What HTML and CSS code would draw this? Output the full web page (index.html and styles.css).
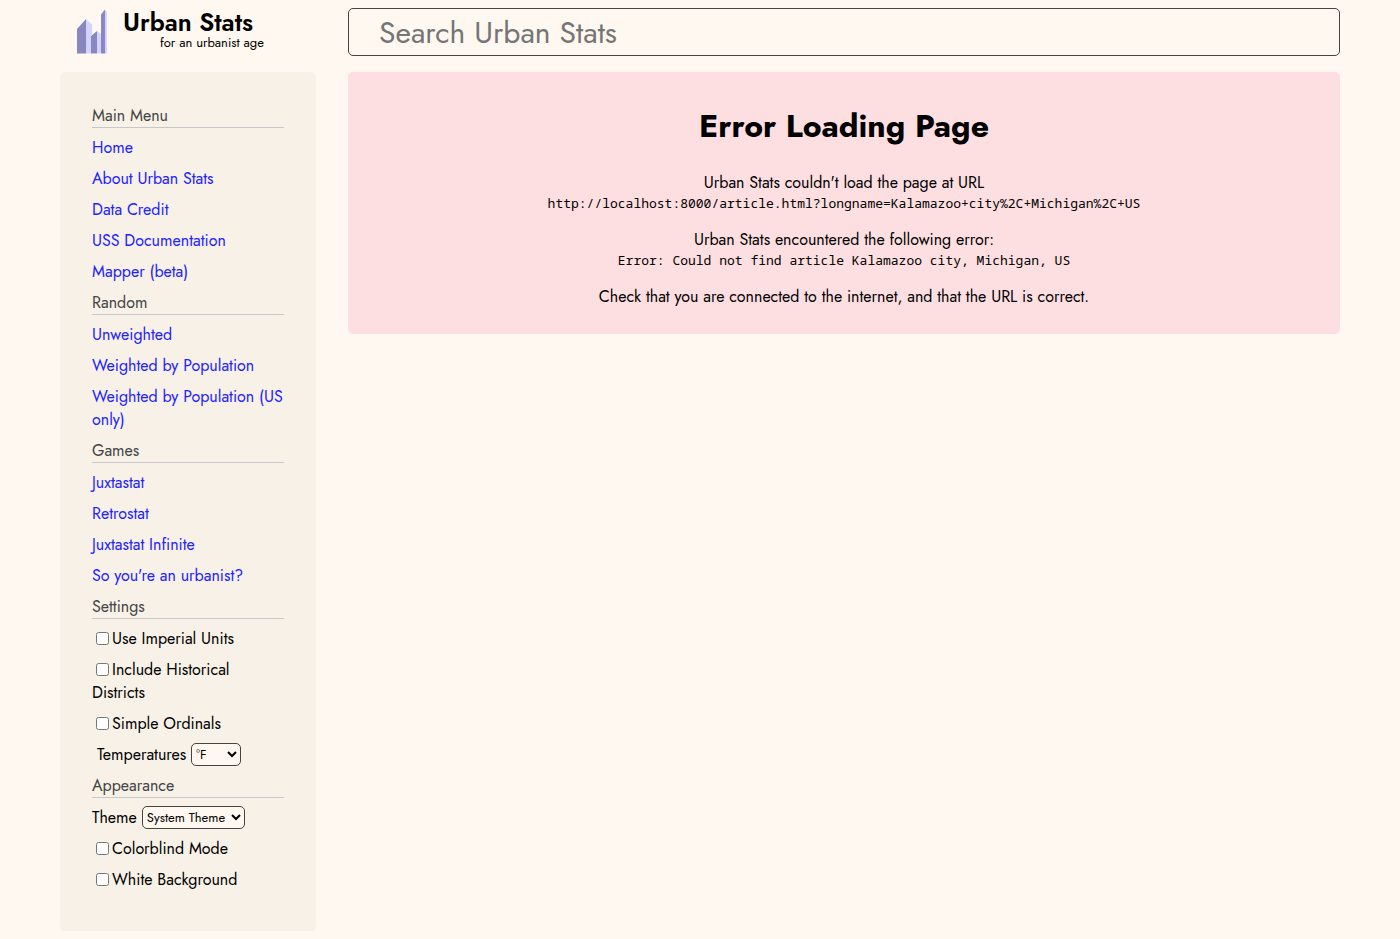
FILE: index.html
```html
<!DOCTYPE html>
<html lang="en">
<head>
<meta charset="utf-8">
<meta name="viewport" content="width=device-width, initial-scale=1">
<title>Urban Stats</title>
<link rel="stylesheet" href="styles.css">
</head>
<body>
<header class="header">
  <a class="logo" href="#">
    <svg class="logo-mark" width="30" height="44" viewBox="0 0 30 44" aria-hidden="true">
      <path fill="#8888bf" d="M0 19 9 9V43.500H0ZM14 26 20 21V43.500H14ZM24 4.500 28 -.5V43.500H24Z"/>
      <path fill="#d3d3ff" d="M9 9 15 14.500V25.200L14 26V43.500H9ZM20 21 24 24V43.500H20ZM28 -.5 30 2.500V43.500H28Z"/>
    </svg>
    <span class="logo-text">
      <span class="logo-name">Urban Stats</span>
      <span class="logo-tagline">for an urbanist age</span>
    </span>
  </a>
  <input class="search" type="text" placeholder="Search Urban Stats" aria-label="Search Urban Stats">
</header>
<div class="body">
  <nav class="sidebar">
    <h2 class="section">Main Menu</h2>
    <ul class="items">
      <li><a href="#">Home</a></li>
      <li><a href="#">About Urban Stats</a></li>
      <li><a href="#">Data Credit</a></li>
      <li><a href="#">USS Documentation</a></li>
      <li><a href="#">Mapper (beta)</a></li>
    </ul>
    <h2 class="section">Random</h2>
    <ul class="items">
      <li><a href="#">Unweighted</a></li>
      <li><a href="#">Weighted by Population</a></li>
      <li><a href="#">Weighted by Population (US only)</a></li>
    </ul>
    <h2 class="section">Games</h2>
    <ul class="items">
      <li><a href="#">Juxtastat</a></li>
      <li><a href="#">Retrostat</a></li>
      <li><a href="#">Juxtastat Infinite</a></li>
      <li><a href="#">So you're an urbanist?</a></li>
    </ul>
    <h2 class="section">Settings</h2>
    <ul class="items">
      <li><input class="check" type="checkbox" id="imperial"><label for="imperial">Use Imperial Units</label></li>
      <li><input class="check" type="checkbox" id="historical"><label for="historical">Include Historical Districts</label></li>
      <li><input class="check" type="checkbox" id="ordinals"><label for="ordinals">Simple Ordinals</label></li>
      <li class="field field-indented"><label for="temperature">Temperatures</label>
        <select class="select select-short" id="temperature"><option>°F</option><option>°C</option></select></li>
    </ul>
    <h2 class="section">Appearance</h2>
    <ul class="items">
      <li class="field"><label for="theme">Theme</label>
        <select class="select select-theme" id="theme"><option>System Theme</option><option>Light Mode</option><option>Dark Mode</option></select></li>
      <li><input class="check" type="checkbox" id="colorblind"><label for="colorblind">Colorblind Mode</label></li>
      <li><input class="check" type="checkbox" id="white"><label for="white">White Background</label></li>
    </ul>
  </nav>
  <main class="error">
    <h1 class="error-title">Error Loading Page</h1>
    <p>Urban Stats couldn't load the page at URL
      <code>http://localhost:8000/article.html?longname=Kalamazoo+city%2C+Michigan%2C+US</code></p>
    <p>Urban Stats encountered the following error:
      <code>Error: Could not find article Kalamazoo city, Michigan, US</code></p>
    <p>Check that you are connected to the internet, and that the URL is correct.</p>
  </main>
</div>
</body>
</html>
```
FILE: styles.css
```css
* {
  box-sizing: border-box;
}

body {
  margin: 0 auto;
  padding: 8px 60px;
  background: #fff8f0;
  color: #000;
  font: 16px/23px Jost, Lato, sans-serif;
}

.header {
  display: grid;
  grid-template-columns: 256px 1fr;
  gap: 32px;
  margin-bottom: 16px;
}

.logo {
  display: flex;
  gap: 16px;
  padding: 2px 17px;
  color: #000;
  text-decoration: none;
}

.logo-mark {
  flex: none;
  overflow: visible;
}

.logo-text {
  display: flex;
  flex-direction: column;
}

.logo-name {
  font-size: 25px;
  font-weight: 600;
  line-height: 24px;
}

.logo-tagline {
  margin-left: 37px;
  font-size: 13px;
  font-weight: 400;
  line-height: 18px;
  white-space: nowrap;
}

.search {
  width: 100%;
  height: 48px;
  padding: 0 30px;
  border: 1px solid #444;
  border-radius: 5px;
  background: #fff8f0;
  color: #000;
  font: 30px Jost, Lato, sans-serif;
}

.search::placeholder {
  color: #757575;
}

.body {
  display: grid;
  grid-template-columns: 256px 1fr;
  gap: 32px;
  align-items: start;
}

.sidebar {
  padding: 32px 32px 40px;
  border-radius: 5px;
  background: #f7f1e8;
}

.section {
  margin: 8px 0;
  border-bottom: 1px solid #c8c8cc;
  color: #444;
  font-size: 16px;
  font-weight: 400;
}

.section:first-child {
  margin-top: 0;
}

.items {
  display: flex;
  flex-direction: column;
  gap: 8px;
  margin: 0;
  padding: 0;
  list-style: none;
}

.items a {
  color: #2222ff;
  text-decoration: none;
}

.check {
  width: 13px;
  height: 13px;
  margin: 3px 3px 0 4px;
  vertical-align: -1px;
}

.field {
  display: flex;
  gap: 5px;
}

.field-indented {
  padding-left: 5px;
}

.select {
  height: 23px;
  border: 1px solid #444;
  border-radius: 5px;
  background: #fff8f0;
  color: #000;
  font: 13px Jost, Lato, sans-serif;
}

.select-short {
  width: 50px;
}

.select-theme {
  width: 103px;
}

.error {
  padding: 32px 32px 26px;
  border-radius: 5px;
  background: #fedfe1;
  text-align: center;
}

.error-title {
  margin: 0 0 23px;
  font-size: 32px;
  line-height: 44px;
}

.error p {
  margin: 0 0 16px;
}

.error p:last-child {
  margin-bottom: 0;
}

.error code {
  display: block;
  font: 13px/18px "Noto Sans Mono", "DejaVu Sans Mono", monospace;
  overflow-wrap: anywhere;
}
```
